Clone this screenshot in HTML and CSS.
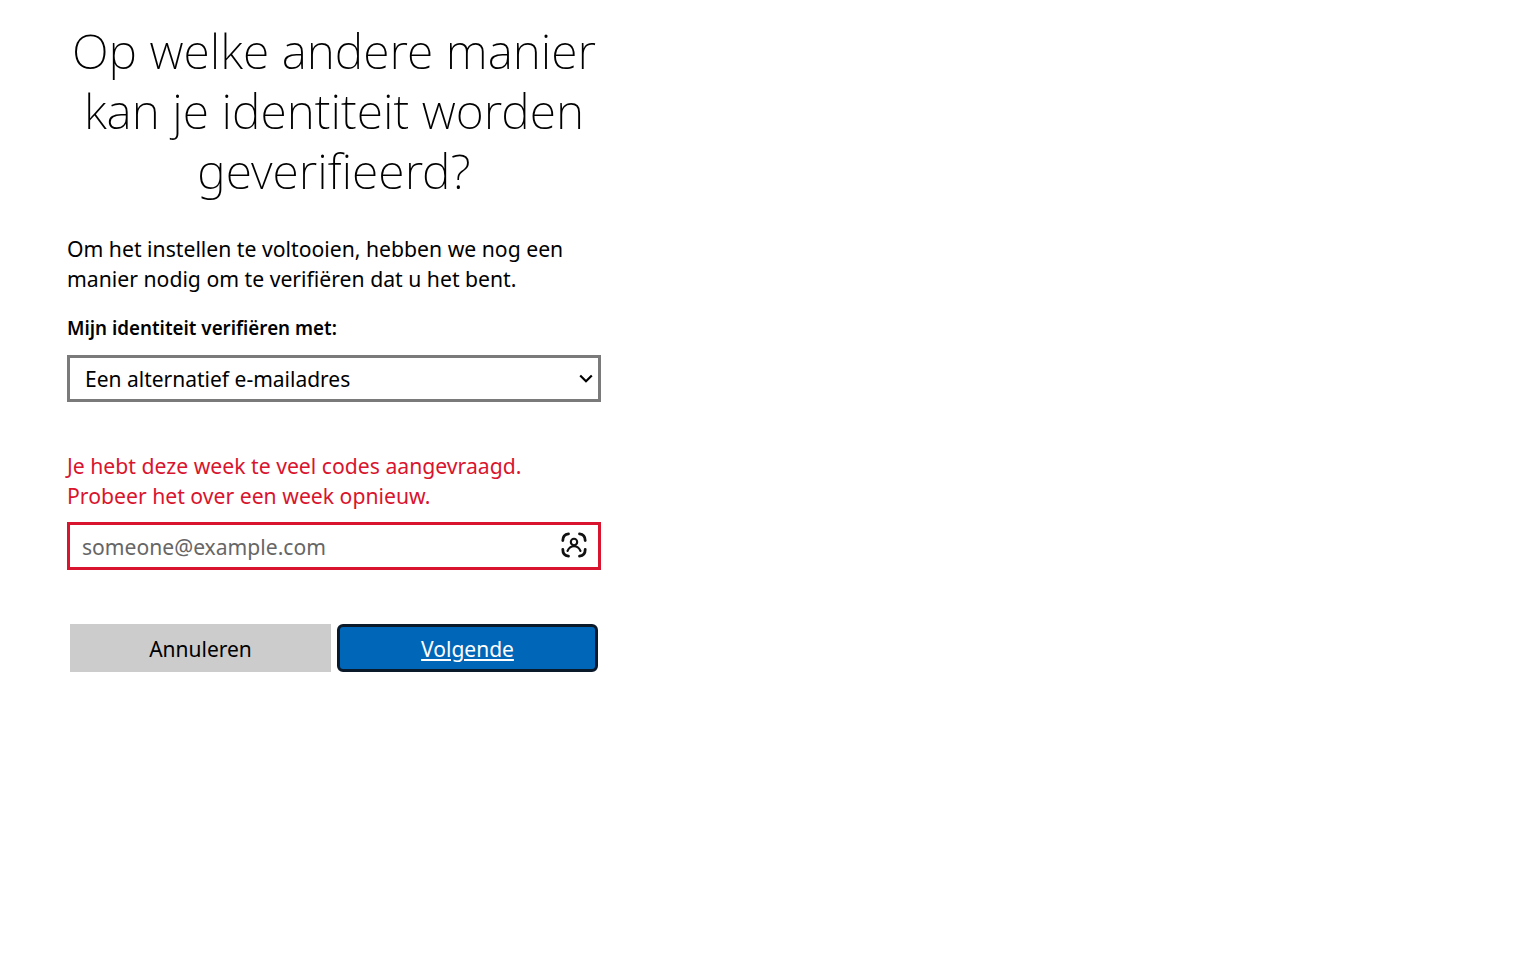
FILE: index.html
```html
<!DOCTYPE html>
<html lang="nl">
<head>
    <meta charset="UTF-8">
    <title>Identiteit verifiëren</title>
    <link rel="stylesheet" href="styles.css">
</head>
<body>

<div class="panel">
    <h1 class="title">Op welke andere manier kan je identiteit worden geverifieerd?</h1>
    <p class="intro">Om het instellen te voltooien, hebben we nog een manier nodig om te verifiëren dat u het bent.</p>
    <label class="field-label">Mijn identiteit verifiëren met:</label>

    <div class="select-box">
        <span>Een alternatief e-mailadres</span>
        <svg class="chevron" width="14" height="9" viewBox="0 0 14 9">
            <path d="M1.2 1.5 L7 7.2 L12.8 1.5" fill="none" stroke="#000" stroke-width="2.2"/>
        </svg>
    </div>

    <p class="error">Je hebt deze week te veel codes aangevraagd. Probeer het over een week opnieuw.</p>

    <div class="input-box">
        <span class="placeholder">someone@example.com</span>
        <svg class="contact-icon" width="26" height="26" viewBox="0 0 26 26" fill="none" stroke="#111" stroke-width="2.8" stroke-linecap="round">
            <path d="M1.8 8.5 C1.8 4.5 4 2.2 7.5 1.8"/>
            <path d="M18.5 1.8 C22 2.2 24.2 4.5 24.2 8.5"/>
            <path d="M1.8 17.5 C1.8 21.5 4 23.8 7.5 24.2"/>
            <path d="M18.5 24.2 C22 23.8 24.2 21.5 24.2 17.5"/>
            <circle cx="13" cy="10" r="3.2" stroke-width="2.1"/>
            <path d="M6.5 19 C8 15.5 10 14.2 13 14.2 C16 14.2 18 15.5 19.5 19" stroke-width="2.1"/>
        </svg>
    </div>

    <div class="buttons">
        <button class="btn btn-cancel">Annuleren</button>
        <button class="btn btn-next"><span>Volgende</span></button>
    </div>
</div>

</body>
</html>
```

FILE: styles.css
```css
body {
    margin: 0;
    background-color: #ffffff;
    font-family: "Noto Sans", "Open Sans", sans-serif;
    color: #000000;
}

.panel {
    width: 534px;
    margin-left: 67px;
    padding-top: 20px;
}

/* Heading */
.title {
    margin: 0;
    font-size: 48.2px;
    font-weight: 250;
    line-height: 60px;
    text-align: center;
}

.intro {
    margin: 34px 0 0;
    font-size: 21.2px;
    line-height: 30px;
}

.field-label {
    display: block;
    margin-top: 19px;
    font-size: 18.8px;
    font-weight: 600;
    line-height: 30px;
}

/* Select */
.select-box {
    display: flex;
    justify-content: space-between;
    align-items: center;
    box-sizing: border-box;
    height: 47px;
    margin-top: 12px;
    padding: 0 5px 0 15px;
    border: 3px solid #7a7a7a;
    font-size: 21px;
}

.error {
    margin: 49px 0 0;
    width: 480px;
    font-size: 21.2px;
    line-height: 30px;
    color: #d9142e;
}

/* Input */
.input-box {
    display: flex;
    justify-content: space-between;
    align-items: center;
    box-sizing: border-box;
    height: 48px;
    margin-top: 11px;
    padding: 0 11px 0 12px;
    border: 3px solid #d9142e;
    font-size: 21.1px;
}

.placeholder {
    color: #666666;
}

.contact-icon {
    margin-top: -2px;
}

/* Buttons */
.buttons {
    display: grid;
    grid-template-columns: repeat(2, 261px);
    gap: 6px;
    margin-top: 54px;
    padding: 0 3px;
}

.btn {
    height: 48px;
    padding: 2px 0 0;
    border: none;
    font-family: inherit;
    font-size: 21px;
}

.btn-cancel {
    background-color: #cccccc;
    color: #000000;
}

.btn-next {
    border: 3px solid #0b1a2b;
    border-radius: 6px;
    background-color: #0067b8;
    color: #ffffff;
}

.btn-next span {
    text-decoration: underline;
}
```
